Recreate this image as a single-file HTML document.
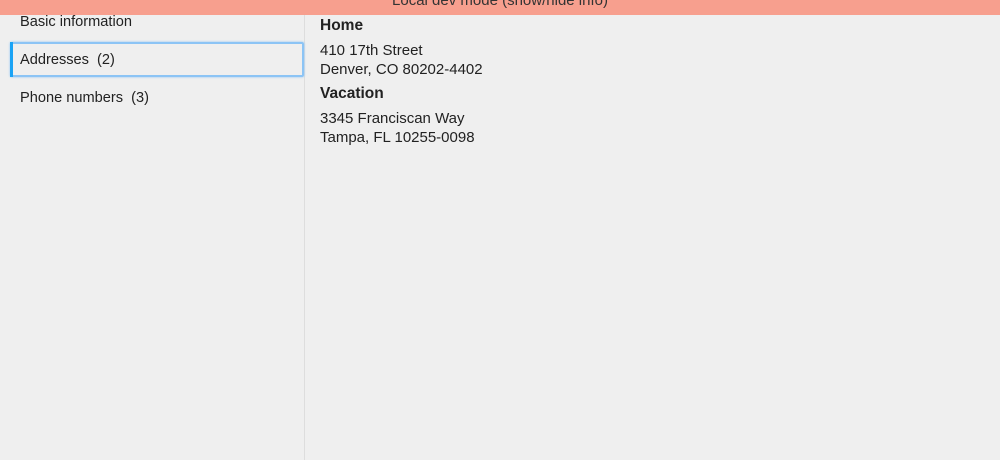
<!DOCTYPE html>
<html><head><style>
body{margin:0;width:1000px;height:460px;background:#efefef;font-family:"Liberation Sans",sans-serif;color:#222;overflow:hidden;position:relative}
.bar{position:absolute;left:0;top:0;width:1000px;height:15px;background:#f79f8e;overflow:hidden}
.bar span{position:absolute;left:0;width:1000px;text-align:center;top:-8px;font-size:15px;color:#333}
.side{position:absolute;left:0;top:15px;width:304px;height:445px;border-right:1px solid #ddd}
.item{position:absolute;left:20px;font-size:14.6px}
.sel{position:absolute;left:10px;top:27px;width:290px;height:31px;border:2px solid #8cc4f5;border-radius:2px;box-shadow:0 0 2px #8cc4f5}
.sel:before{content:"";position:absolute;left:-2px;top:-2px;width:3px;height:35px;background:#1aa3f5}
.main{position:absolute;left:320px;font-size:15px;line-height:19px}
h{font-weight:bold;font-size:15.5px;display:block}
</style></head><body>
<div class="bar"><span>Local dev mode (show/hide info)</span></div>
<div class="side">
<div class="item" style="top:-1px">Basic information</div>
<div class="sel"></div>
<div class="item" style="top:37px">Addresses&nbsp;&nbsp;(2)</div>
<div class="item" style="top:75px">Phone numbers&nbsp;&nbsp;(3)</div>
</div>
<div class="main" style="top:16px"><h>Home</h></div>
<div class="main" style="top:41px">410 17th Street<br>Denver, CO 80202-4402</div>
<div class="main" style="top:84px"><h>Vacation</h></div>
<div class="main" style="top:109px">3345 Franciscan Way<br>Tampa, FL 10255-0098</div>
</body></html>
